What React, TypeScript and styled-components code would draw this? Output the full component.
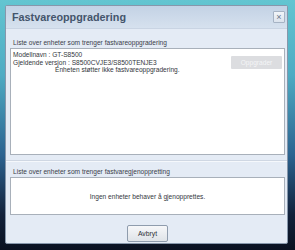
import React from "react";
import styled, { createGlobalStyle } from "styled-components";

const GlobalStyle = createGlobalStyle`
  html, body {
    margin: 0;
    padding: 0;
  }
  body {
    font-family: "Liberation Sans", Arial, sans-serif;
  }
`;

const Desktop = styled.div`
  width: 295px;
  height: 250px;
  box-sizing: border-box;
  padding: 5px 7px 6px 5px;
  background: linear-gradient(
    to bottom,
    #63c5d1 0%,
    #4eabc3 30%,
    #2c6390 62%,
    #12213a 86%,
    #0a1120 100%
  );
`;

const Dialog = styled.div`
  height: 100%;
  box-sizing: border-box;
  display: flex;
  flex-direction: column;
  border: 1px solid #8797ab;
  border-radius: 2px;
  background: #e4ebf5;
  overflow: hidden;
`;

const TitleBar = styled.div`
  height: 22px;
  flex: none;
  display: flex;
  align-items: center;
  justify-content: space-between;
  padding: 0 2px 0 6px;
  background: linear-gradient(to bottom, #c3d2e5, #d6e1ee);
  border-bottom: 1px solid #c9d4e3;
`;

const Title = styled.span`
  font-size: 10.8px;
  font-weight: bold;
  color: #44556c;
`;

const CloseButton = styled.button`
  width: 12px;
  height: 12px;
  padding: 0;
  display: flex;
  align-items: center;
  justify-content: center;
  border: 1px solid #a6b3c4;
  border-radius: 1px;
  background: linear-gradient(to bottom, #f2f5f9, #dbe3ed);
  color: #6a7686;
  font-size: 9px;
  line-height: 1;
  font-family: "Liberation Sans", Arial, sans-serif;
`;

const Body = styled.div`
  flex: 1;
  display: flex;
  flex-direction: column;
  padding: 9px 2px 0 4px;
`;

const SectionLabel = styled.div`
  font-size: 6.6px;
  line-height: 9px;
  color: #3a4049;
  padding-left: 3px;
  margin-bottom: 1px;
`;

const ListBox = styled.div<{ $height: number; $center?: boolean }>`
  height: ${(p) => p.$height}px;
  box-sizing: border-box;
  background: #fff;
  border: 1px solid #a8b0ba;
  display: flex;
  align-items: ${(p) => (p.$center ? "center" : "flex-start")};
  justify-content: ${(p) => (p.$center ? "center" : "space-between")};
  padding: ${(p) => (p.$center ? "0" : "2px 2px 0 2px")};
`;

const DeviceInfo = styled.div`
  font-size: 6.6px;
  line-height: 7.5px;
  color: #33373d;
`;

const Indented = styled.div`
  padding-left: 42px;
`;

const UpgradeButton = styled.button`
  margin-top: 5px;
  width: 51px;
  height: 13px;
  padding: 0;
  border: none;
  border-radius: 1px;
  background: #dcdde0;
  color: #f4f5f7;
  font-size: 6.6px;
  font-family: "Liberation Sans", Arial, sans-serif;
`;

const EmptyText = styled.span`
  font-size: 6.6px;
  color: #33373d;
`;

const Separator = styled.div`
  margin: 5px -2px 5px -4px;
  height: 1px;
  background: #cfd7e3;
  border-bottom: 1px solid #f5f8fc;
`;

const Footer = styled.div`
  flex: 1;
  display: flex;
  align-items: center;
  justify-content: center;
  padding-top: 8px;
`;

const CancelButton = styled.button`
  width: 41px;
  height: 17px;
  padding: 0;
  border: 1px solid #8f9cad;
  border-radius: 2px;
  background: linear-gradient(to bottom, #f6f7f9, #dfe3e8);
  color: #2b2f36;
  font-size: 6.8px;
  font-family: "Liberation Sans", Arial, sans-serif;
`;

export default function App() {
  return (
    <>
      <GlobalStyle />
      <Desktop>
        <Dialog>
          <TitleBar>
            <Title>Fastvareoppgradering</Title>
            <CloseButton>×</CloseButton>
          </TitleBar>
          <Body>
            <SectionLabel>Liste over enheter som trenger fastvareoppgradering</SectionLabel>
            <ListBox $height={107}>
              <DeviceInfo>
                <div>Modellnavn : GT-S8500</div>
                <div>Gjeldende versjon : S8500CVJE3/S8500TENJE3</div>
                <Indented>Enheten støtter ikke fastvareoppgradering.</Indented>
              </DeviceInfo>
              <UpgradeButton disabled>Oppgrader</UpgradeButton>
            </ListBox>
            <Separator />
            <SectionLabel>Liste over enheter som trenger fastvaregjenoppretting</SectionLabel>
            <ListBox $height={38} $center>
              <EmptyText>Ingen enheter behaver å gjenopprettes.</EmptyText>
            </ListBox>
            <Footer>
              <CancelButton>Avbryt</CancelButton>
            </Footer>
          </Body>
        </Dialog>
      </Desktop>
    </>
  );
}
